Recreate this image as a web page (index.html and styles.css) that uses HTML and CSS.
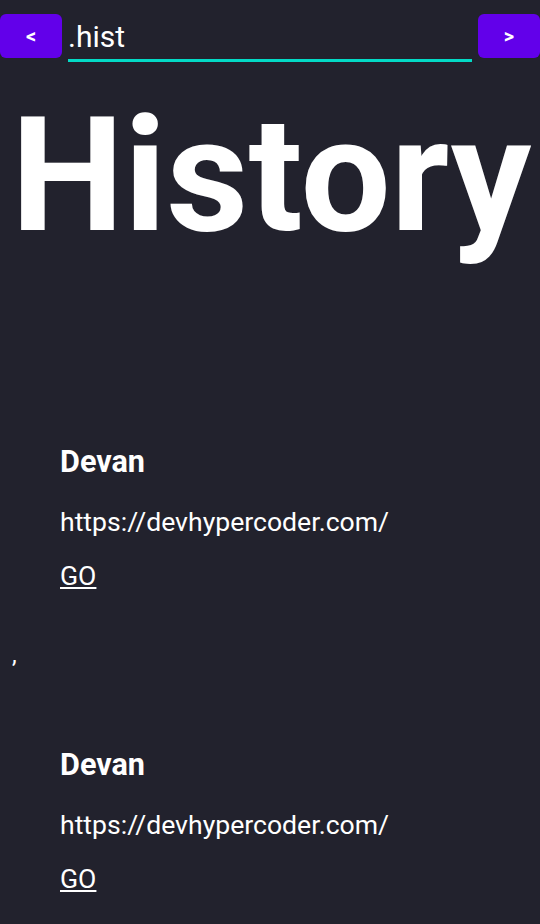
FILE: index.html
```html
<!DOCTYPE html>
<html lang="en">
<head>
<meta charset="utf-8">
<title>History</title>
<link rel="stylesheet" href="styles.css">
</head>
<body>
<header class="topbar">
  <button class="nav-btn" type="button">&lt;</button>
  <input class="path-input" type="text" value=".hist">
  <button class="nav-btn" type="button">&gt;</button>
</header>
<h1 class="title">History</h1>
<main class="list">
  <div class="item">
    <div class="name">Devan</div>
    <div class="url">https://devhypercoder.com/</div>
    <a class="go" href="#">GO</a>
  </div>
  <div class="sep">,</div>
  <div class="item">
    <div class="name">Devan</div>
    <div class="url">https://devhypercoder.com/</div>
    <a class="go" href="#">GO</a>
  </div>
</main>
</body>
</html>
```

FILE: styles.css
```css
html, body {
  margin: 0;
  padding: 0;
  background: #22222d;
  color: #ffffff;
  font-family: Roboto, "Liberation Sans", sans-serif;
}

.topbar {
  display: flex;
  align-items: flex-start;
  padding-top: 14px;
}

.nav-btn {
  flex: 0 0 62px;
  height: 44px;
  border: none;
  border-radius: 6px;
  background: #6200ea;
  color: #ffffff;
  font-family: Roboto, "Liberation Sans", sans-serif;
  font-size: 20px;
  font-weight: 700;
  padding: 0;
}

.path-input {
  flex: 1 1 auto;
  min-width: 0;
  margin: 0 6px;
  height: 48px;
  box-sizing: border-box;
  border: none;
  border-bottom: 3px solid #03dac6;
  background: transparent;
  color: #ffffff;
  font-family: Roboto, "Liberation Sans", sans-serif;
  font-size: 30px;
  padding: 0;
  outline: none;
}

.title {
  margin: 20px 0 0;
  padding-left: 11px;
  font-size: 160px;
  font-weight: 700;
  line-height: normal;
}

.list {
  margin-top: 175px;
  padding: 0 12px;
}

.item {
  padding: 82px 0 54px 48px;
}

.list .item:first-child {
  padding-top: 0;
}

.name {
  font-size: 30.6px;
  font-weight: 700;
  line-height: 36px;
}

.url {
  margin-top: 27px;
  font-size: 26.6px;
  line-height: 30px;
}

.go {
  display: inline-block;
  margin-top: 24px;
  font-size: 26.6px;
  line-height: 30px;
  color: #ffffff;
  text-decoration: underline;
}

.sep {
  font-size: 24px;
  line-height: 20px;
}
```
